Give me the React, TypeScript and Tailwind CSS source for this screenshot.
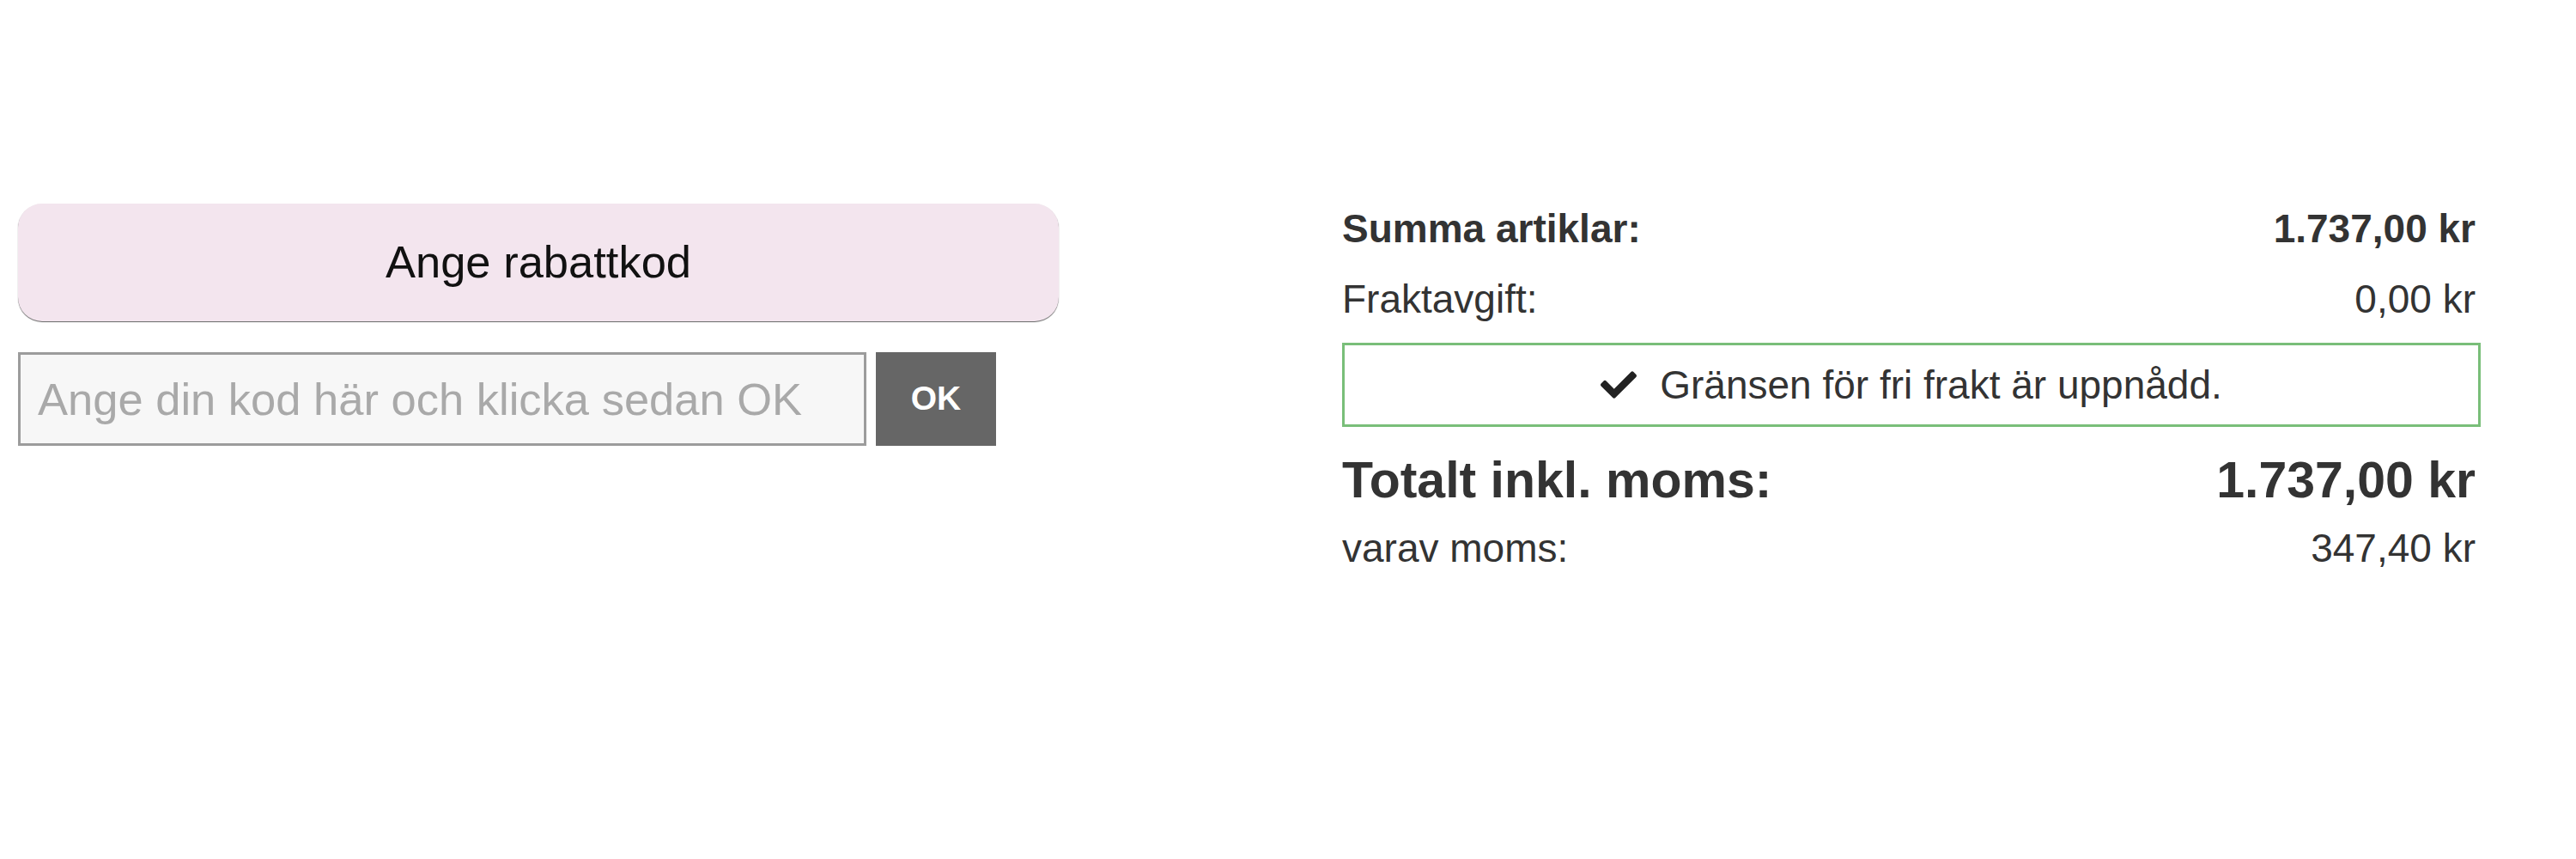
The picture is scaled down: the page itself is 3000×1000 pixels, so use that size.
import React from "react";
import { FaCheck } from "react-icons/fa";

export default function App() {
  return (
    <div className="w-[3000px] h-[1000px] bg-white font-['Liberation_Sans',Arial,sans-serif]">
      <div className="flex pt-[237px]">
        {/* Left column */}
        <div className="ml-[21px] w-[1212px] flex flex-col">
          <div className="h-[137px] rounded-[28px] bg-[#f3e5ee] shadow-[0_1px_1px_rgba(0,0,0,0.6)] flex items-center justify-center text-[52.5px] text-[#111] leading-none">
            Ange rabattkod
          </div>
          <div className="mt-[36px] flex h-[109px]">
            <input
              type="text"
              placeholder="Ange din kod här och klicka sedan OK"
              className="w-[988px] h-[109px] border-[3px] border-[#9c9c9c] bg-[#f7f7f7] pl-[20px] text-[52.5px] text-[#333] placeholder:text-[#a9a9a9] outline-none font-['Liberation_Sans',Arial,sans-serif]"
            />
            <button className="ml-[11px] w-[140px] h-[109px] bg-[#666666] text-white font-bold text-[39px] flex items-center justify-center font-['Liberation_Sans',Arial,sans-serif]">
              OK
            </button>
          </div>
        </div>

        {/* Right column */}
        <div className="ml-[330px] w-[1326px] flex flex-col text-[#333]">
          <div className="h-[57px] flex items-center justify-between pr-[6px] text-[46px] font-bold leading-none">
            <span>Summa artiklar:</span>
            <span>1.737,00 kr</span>
          </div>
          <div className="mt-[26px] h-[56px] flex items-center justify-between pr-[6px] text-[46px] leading-none">
            <span>Fraktavgift:</span>
            <span>0,00 kr</span>
          </div>
          <div className="mt-[23px] h-[98px] border-[3px] border-[#79be79] flex items-center justify-center text-[46px] leading-none">
            <FaCheck className="w-[42px] h-[42px] text-[#222]" />
            <span className="ml-[27px]">Gränsen för fri frakt är uppnådd.</span>
          </div>
          <div className="mt-[28px] h-[68px] flex items-center justify-between pr-[6px] text-[59px] font-bold leading-none">
            <span>Totalt inkl. moms:</span>
            <span>1.737,00 kr</span>
          </div>
          <div className="mt-[17px] h-[56px] flex items-center justify-between pr-[6px] text-[46px] leading-none">
            <span>varav moms:</span>
            <span>347,40 kr</span>
          </div>
        </div>
      </div>
    </div>
  );
}
